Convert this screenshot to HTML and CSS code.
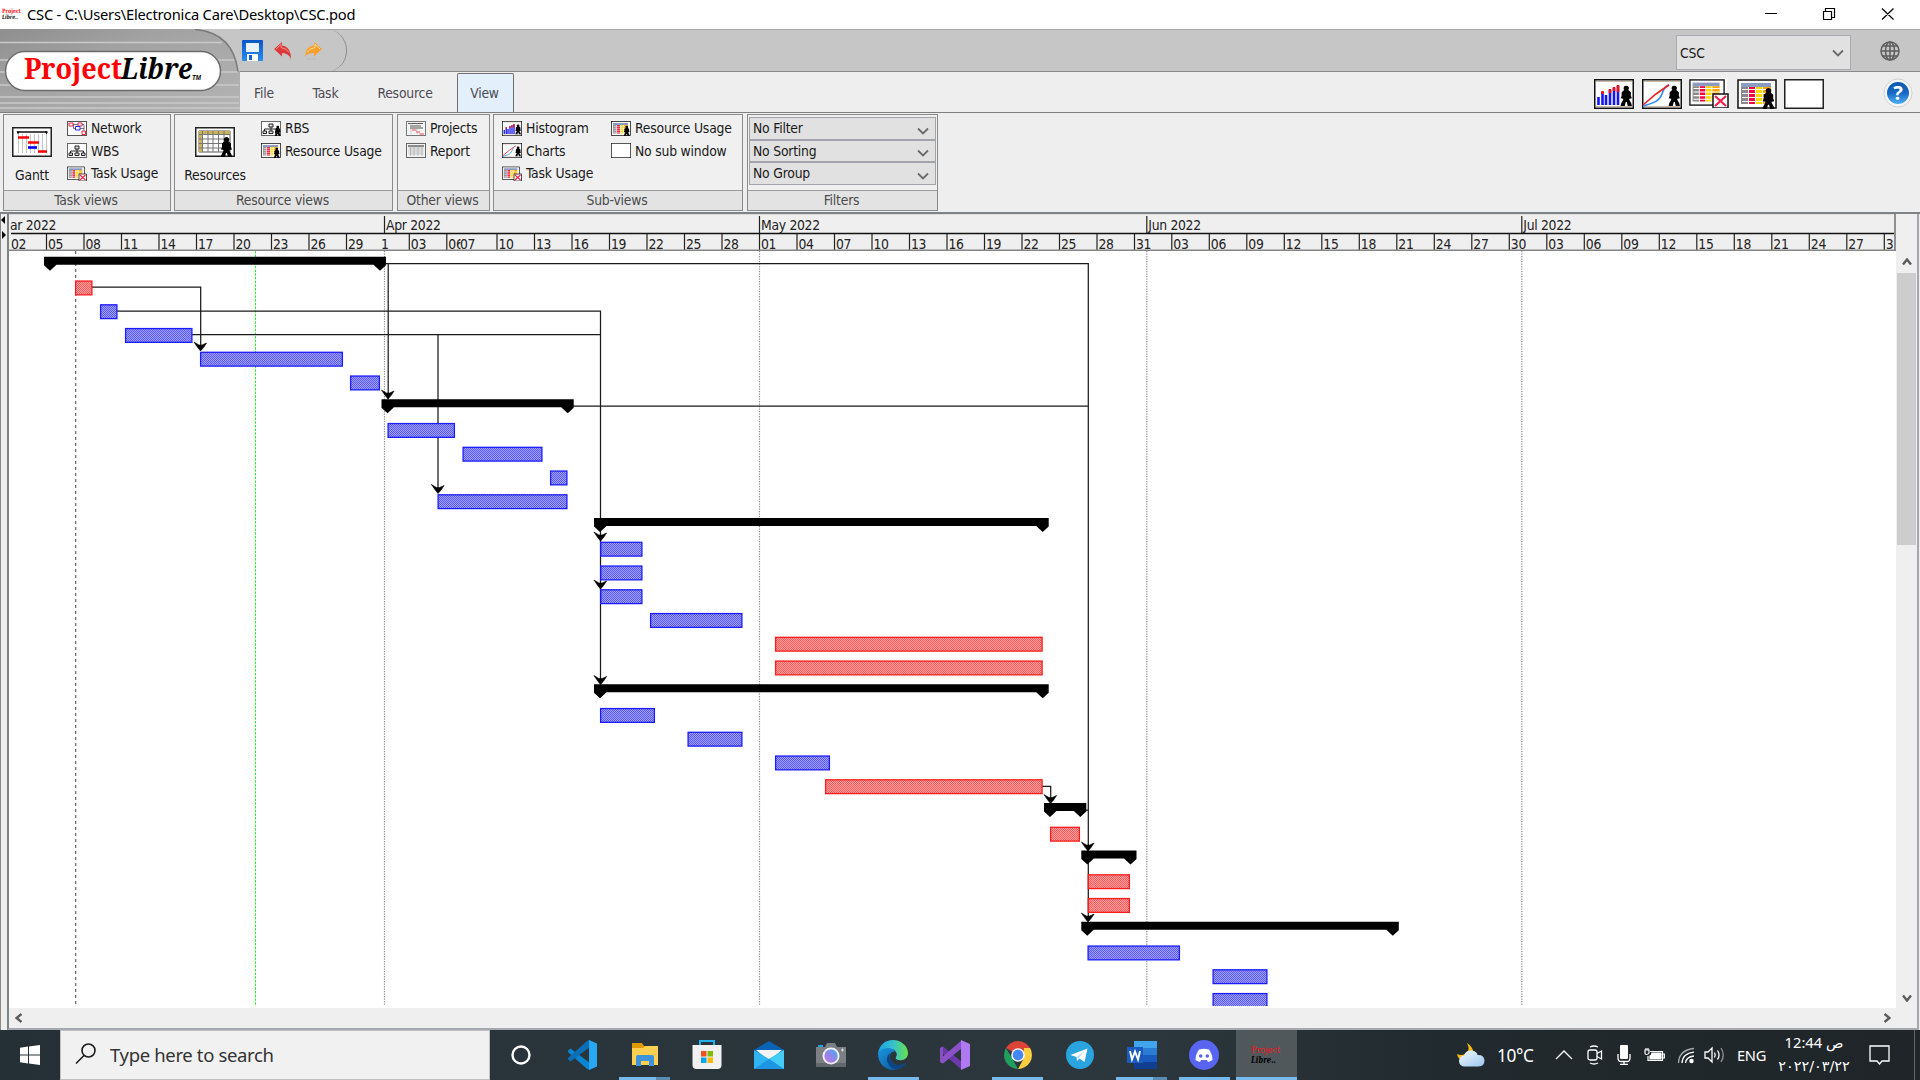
FILE: index.html
```html
<!DOCTYPE html>
<html lang="en">
<head>
<meta charset="utf-8">
<title>CSC - C:\Users\Electronica Care\Desktop\CSC.pod</title>
<link rel="stylesheet" href="styles.css">
</head>
<body>
<svg class="defs" width="0" height="0" aria-hidden="true">
  <defs>
    <linearGradient id="gSteel" x1="0" y1="0" x2="1" y2="1"><stop offset="0" stop-color="#8e8e8e"/><stop offset=".35" stop-color="#a2a2a2"/><stop offset="1" stop-color="#b4b4b4"/></linearGradient>
    <linearGradient id="gHelp" x1="0" y1="0" x2="0" y2="1"><stop offset="0" stop-color="#0d58b0"/><stop offset=".5" stop-color="#1668c4"/><stop offset="1" stop-color="#4db0f4"/></linearGradient>
    <linearGradient id="gDisk" x1="0" y1="0" x2="0" y2="1"><stop offset="0" stop-color="#0a55c4"/><stop offset="1" stop-color="#2a8cf0"/></linearGradient>
    <linearGradient id="gEdgeA" x1="0" y1="0" x2="1" y2="0"><stop offset="0" stop-color="#1ba0e0"/><stop offset=".5" stop-color="#35c2cf"/><stop offset="1" stop-color="#66e04a"/></linearGradient>
    <linearGradient id="gEdgeB" x1="0" y1="0" x2="1" y2="1"><stop offset="0" stop-color="#1b96e0"/><stop offset="1" stop-color="#0b4e94"/></linearGradient>
    <linearGradient id="gLens" x1="1" y1="0" x2="0" y2="1"><stop offset="0" stop-color="#3bb4f0"/><stop offset=".5" stop-color="#8f84e8"/><stop offset="1" stop-color="#c77ee0"/></linearGradient>
    <linearGradient id="gCloud" x1="0" y1="0" x2="1" y2="1"><stop offset="0" stop-color="#f2f8ff"/><stop offset="1" stop-color="#9cc6ee"/></linearGradient>
    <symbol id="person" viewBox="0 0 12 20"><path d="M6 0a2.6 2.6 0 0 1 2 4.3L10.500 6.500V10l1 2.500L9 13v1l2 3.500.5 2.500H7.500L6.500 16h-1l-1 4H.5L1 17.500 3 14v-1L.5 12.500l1-2.500V6.500L4 4.300A2.600 2.600 0 0 1 6 0z" fill="#000"/></symbol>
    <symbol id="i-gantt" viewBox="0 0 40 30"><rect x=".75" y=".75" width="38.500" height="28.500" fill="#fff" stroke="#222" stroke-width="1.500"/><path d="M5 5h30" stroke="#111" stroke-width="1.500"/><path d="M4.500 4.500h3l-1.500 3zM33 4.500h3l-1.500 3z"/><path d="M6.500 7v19M10.500 7v19M14.500 7v19M18.500 7v19M22.500 7v19M26.500 7v19M30.500 7v19M34.500 7v19" stroke="#c4c4c4"/><path d="M6 10.500h11M16 15.500h11M26 24.500h9" stroke="#f00" stroke-width="2.600"/><path d="M16 20.500h9" stroke="#00f" stroke-width="2.600"/></symbol>
    <symbol id="i-network" viewBox="0 0 40 30"><rect x="1" y="1" width="38" height="28" fill="#fff" stroke="#555" stroke-width="2"/><path d="M4 4h8v6H4zM22 4h8v6h-8zM30 20h7v7h-7z" fill="#fff" stroke="#ff2540" stroke-width="2"/><path d="M17 11h9v7h-9z" fill="#fff" stroke="#22f" stroke-width="2"/><path d="M12 7h10M30 7h4v12M13 8v7h4M26 15h8" fill="none" stroke="#446" stroke-width="1.500"/></symbol>
    <symbol id="i-wbs" viewBox="0 0 40 30"><rect x="1" y="1" width="38" height="28" fill="#fff" stroke="#666" stroke-width="2"/><path d="M16 6h8v6h-8zM4 20h7v5H4zM16 20h8v5h-8zM29 20h7v5h-7z" fill="#ddd" stroke="#222" stroke-width="2"/><path d="M20 12v8M7 20v-4h26v4" fill="none" stroke="#222" stroke-width="2"/></symbol>
    <symbol id="i-rbs" viewBox="0 0 40 30"><use href="#i-wbs" width="40" height="30"/><use href="#person" x="27" y="9" width="13" height="21"/></symbol>
    <symbol id="i-usage" viewBox="0 0 40 30"><rect x="1" y="1" width="38" height="28" fill="#fff" stroke="#111" stroke-width="1.500"/><path d="M4 4h30v4H4z" fill="#8c9cc0"/><path d="M4 8h7v17H4z" fill="#8a8a8a"/><path d="M12 8h6v17h-6z" fill="#f5073e"/><path d="M19 8h6v17h-6z" fill="#ffd800"/><path d="M26 8h8v17h-8z" fill="#ffa500"/><path d="M5 10.500h29M5 14.500h29M5 18.500h29M5 22.500h29" stroke="#fff" stroke-width="1.200"/></symbol>
    <symbol id="i-taskusage" viewBox="0 0 40 30"><use href="#i-usage" width="36" height="29"/><rect x="24" y="16" width="15" height="14" fill="#fff" stroke="#111" stroke-width="1.500"/><path d="M26 18l11 10M37 18L26 28" stroke="#f02048" stroke-width="2.200"/></symbol>
    <symbol id="i-resusage" viewBox="0 0 40 30"><use href="#i-usage" width="40" height="30"/><use href="#person" x="25" y="9" width="13" height="21"/></symbol>
    <symbol id="i-resources" viewBox="0 0 40 30"><rect x=".75" y=".75" width="38.500" height="28.500" fill="#fff" stroke="#222" stroke-width="1.500"/><path d="M4 4h31v21H4z" fill="#fff" stroke="#555"/><path d="M4 4h31v3H4zM4 4h3v21H4z" fill="#c9b45a"/><path d="M4 7.500h31M4 12h31M4 16.500h31M4 21h31M7.500 4v21M13 4v21M18 4v21M23.500 4v21M29 4v21" stroke="#777"/><use href="#person" x="25" y="10" width="13" height="20"/></symbol>
    <symbol id="i-projects" viewBox="0 0 40 30"><rect x="1" y="1" width="38" height="28" fill="#f4f4f4" stroke="#777" stroke-width="2"/><path d="M4 5h30M8 10h22M8 14h26" stroke="#555" stroke-width="2"/><path d="M12 18h9M20 22h8M27 26h9" stroke="#f45" stroke-width="2.400"/><path d="M10 4v22M22 4v22" stroke="#aaa"/></symbol>
    <symbol id="i-report" viewBox="0 0 40 30"><rect x="1" y="1" width="38" height="28" fill="#f4f4f4" stroke="#666" stroke-width="2"/><path d="M4 6h32" stroke="#666" stroke-width="3"/><path d="M5 10h30M5 14h30M5 18h30M5 22h30M9 6v20M16 6v20M24 6v20M32 6v20" stroke="#aaa" stroke-width="1.400"/></symbol>
    <symbol id="i-histo" viewBox="0 0 40 30"><rect x=".75" y=".75" width="38.500" height="28.500" fill="#fff" stroke="#111" stroke-width="1.500"/><path d="M2 2.500h36M2 27.500h36" stroke="#cdb8a6"/><path d="M4.500 26v-8M8.500 26V13M12 26V16M16 26V11M20 26V9M24 26V7" stroke="#1414f5" stroke-width="2.600"/><path d="M8.500 15v-3M16 14v-4M20 12V8M24 13V6" stroke="#f01010" stroke-width="2.600"/><use href="#person" x="26" y="6.500" width="12.500" height="20.500"/></symbol>
    <symbol id="i-charts" viewBox="0 0 40 30"><rect x=".75" y=".75" width="38.500" height="28.500" fill="#fff" stroke="#111" stroke-width="1.500"/><path d="M2 2.500h36M2 27.500h36" stroke="#cdb8a6"/><path d="M1 27c10-3 16-4 19-12s4-8 7-9" fill="none" stroke="#2a8cff" stroke-width="1.600"/><path d="M1 26L14 15l13-9" fill="none" stroke="#f02020" stroke-width="1.600"/><use href="#person" x="26" y="6.500" width="12.500" height="20.500"/></symbol>
    <symbol id="i-blank" viewBox="0 0 40 30"><rect x=".75" y=".75" width="38.500" height="28.500" fill="#fff" stroke="#222" stroke-width="1.500"/></symbol>
    <symbol id="i-down" viewBox="0 0 12 8"><path d="M1 1.500l5 5 5-5" fill="none" stroke="#6a6a6a" stroke-width="1.800"/></symbol>
    <pattern id="hBlue" width="2" height="2" patternUnits="userSpaceOnUse"><rect width="2" height="2" fill="#a4a4ff"/><path d="M0 0h1v1H0zM1 1h1v1H1z" fill="#5656ff"/></pattern>
    <pattern id="hRed" width="2" height="2" patternUnits="userSpaceOnUse"><rect width="2" height="2" fill="#ffa4a4"/><path d="M0 0h1v1H0zM1 1h1v1H1z" fill="#ff5656"/></pattern>
  </defs>
</svg>

<header class="titlebar">
  <svg class="appicon" width="22" height="20" viewBox="0 0 22 20"><text x="0" y="9" class="mini mini-red" textLength="19" lengthAdjust="spacingAndGlyphs">Project</text><text x="0" y="15" class="mini mini-it" textLength="16" lengthAdjust="spacingAndGlyphs">Libre..</text></svg>
  <span class="title">CSC - C:\Users\Electronica Care\Desktop\CSC.pod</span>
  <svg class="winctl" width="150" height="28" viewBox="0 0 150 28" fill="none" stroke="#000" stroke-width="1.200"><path d="M15 13.500h12M73.500 11.500h8v8h-8zM75.500 11.500v-3h9v9h-3M132 8.500l11.500 11M143.500 8.500L132 19.500"/></svg>
</header>

<section class="ribbon-top">
  <svg class="brand" width="240" height="83" viewBox="0 0 240 83">
    <rect width="240" height="83" fill="#c6c6c6"/>
    <path d="M0 0h195q38 3 43 42h2v41H0z" fill="url(#gSteel)"/>
    <path d="M0 13.500h222M0 31h235M0 43h238M0 56h239M0 68h239M0 74h239M0 79h240" stroke="#c9c9c9" stroke-width="1.500"/>
    <path d="M195 .5q38 3 43 42" fill="none" stroke="#7a7a7a" stroke-width="1.500"/>
    <rect x="5.500" y="22.500" width="215" height="39" rx="19.500" fill="#fff" stroke="#6c6c6c" stroke-width="1.500"/>
    <text x="24" y="50" class="logo logo-red" textLength="98" lengthAdjust="spacingAndGlyphs">Project</text>
    <text x="121" y="50" class="logo logo-it" textLength="71" lengthAdjust="spacingAndGlyphs">Libre</text>
    <text x="192" y="51" class="logo-tm" textLength="9" lengthAdjust="spacingAndGlyphs">TM</text>
  </svg>
  <div class="top-right">
    <div class="quickbar">
      <div class="quick">
        <svg width="21" height="21" viewBox="0 0 21 21"><rect width="21" height="21" rx="1" fill="url(#gDisk)"/><path d="M4 3h13v9H4z" fill="#e8f2ff"/><path d="M5 14h11v7H5z" fill="#fff"/><path d="M7 15h3v5H7z" fill="#1560c8"/></svg>
        <svg width="18" height="18" viewBox="0 0 18 18"><path d="M0 7l8-7v3.500q9 1 9 14Q15 11 8 11v3.500z" fill="#dc3a3a"/><path d="M2 7l5-4.500v3q6 1 8 5" fill="none" stroke="#f49090"/></svg>
        <svg width="18" height="18" viewBox="0 0 18 18"><path d="M17 7L9 0v3.500Q0 4.500 0 15q2-4 9-4v3.500z" fill="#f5a02c"/><path d="M15 7l-5-4.500v3q-6 1-8 5" fill="none" stroke="#ffd890"/><path d="M1 17h10" stroke="#bbb"/></svg>
      </div>
      <div class="project-select"><span>CSC</span><svg width="12" height="8"><use href="#i-down"/></svg></div>
      <svg class="globe" width="20" height="20" viewBox="0 0 20 20" fill="none" stroke="#5e5e5e" stroke-width="1.500"><circle cx="10" cy="10" r="9"/><ellipse cx="10" cy="10" rx="4.500" ry="9"/><path d="M10 1v18M1 10h18M2.500 5h15M2.500 15h15"/></svg>
    </div>
    <nav class="tabs">
      <span class="tab t1">File</span><span class="tab t2">Task</span><span class="tab t3">Resource</span><span class="tab t4 active">View</span>
      <div class="tools">
        <svg width="40" height="30"><use href="#i-histo"/></svg>
        <svg width="40" height="30"><use href="#i-charts"/></svg>
        <svg width="40" height="32" viewBox="0 0 40 30"><rect width="38" height="30" fill="#fff"/><use href="#i-taskusage"/></svg>
        <svg width="40" height="30"><use href="#i-resusage"/></svg>
        <svg width="40" height="30"><use href="#i-blank"/></svg>
      </div>
      <svg class="help" width="30" height="30" viewBox="0 0 30 30"><circle cx="15" cy="15" r="14" fill="#f6f6f6" stroke="#d2d2d2"/><circle cx="15" cy="15" r="11" fill="url(#gHelp)"/><text x="15" y="22" text-anchor="middle" class="q">?</text></svg>
    </nav>
  </div>
</section>

<section class="bands">
  <div class="band b1">
    <div class="content">
      <div class="big"><svg width="40" height="30"><use href="#i-gantt"/></svg><span>Gantt</span></div>
      <div class="col">
        <div class="cmd"><svg width="20" height="15"><use href="#i-network"/></svg><span>Network</span></div>
        <div class="cmd"><svg width="20" height="15"><use href="#i-wbs"/></svg><span>WBS</span></div>
        <div class="cmd"><svg width="20" height="15"><use href="#i-taskusage"/></svg><span>Task Usage</span></div>
      </div>
    </div>
    <div class="caption">Task views</div>
  </div>
  <div class="band b2">
    <div class="content">
      <div class="big"><svg width="40" height="30"><use href="#i-resources"/></svg><span>Resources</span></div>
      <div class="col">
        <div class="cmd"><svg width="20" height="15"><use href="#i-rbs"/></svg><span>RBS</span></div>
        <div class="cmd"><svg width="20" height="15"><use href="#i-resusage"/></svg><span>Resource Usage</span></div>
      </div>
    </div>
    <div class="caption">Resource views</div>
  </div>
  <div class="band b3">
    <div class="content">
      <div class="col">
        <div class="cmd"><svg width="20" height="15"><use href="#i-projects"/></svg><span>Projects</span></div>
        <div class="cmd"><svg width="20" height="15"><use href="#i-report"/></svg><span>Report</span></div>
      </div>
    </div>
    <div class="caption">Other views</div>
  </div>
  <div class="band b4">
    <div class="content">
      <div class="col first">
        <div class="cmd"><svg width="20" height="15"><use href="#i-histo"/></svg><span>Histogram</span></div>
        <div class="cmd"><svg width="20" height="15"><use href="#i-charts"/></svg><span>Charts</span></div>
        <div class="cmd"><svg width="20" height="15"><use href="#i-taskusage"/></svg><span>Task Usage</span></div>
      </div>
      <div class="col">
        <div class="cmd"><svg width="20" height="15"><use href="#i-resusage"/></svg><span>Resource Usage</span></div>
        <div class="cmd"><svg width="20" height="15"><use href="#i-blank"/></svg><span>No sub window</span></div>
      </div>
    </div>
    <div class="caption">Sub-views</div>
  </div>
  <div class="band b5">
    <div class="content filters">
      <div class="combo"><span>No Filter</span><svg width="12" height="8"><use href="#i-down"/></svg></div>
      <div class="combo"><span>No Sorting</span><svg width="12" height="8"><use href="#i-down"/></svg></div>
      <div class="combo"><span>No Group</span><svg width="12" height="8"><use href="#i-down"/></svg></div>
    </div>
    <div class="caption">Filters</div>
  </div>
</section>

<main class="workspace">
  <div class="splitter"><svg width="7" height="30" viewBox="0 0 7 30"><path d="M6 2v8L2 6zM3 17v8l4-4z"/></svg></div>
  <div class="pane">
    <div class="chartcol">
      <svg id="timescale" width="1887" height="37" viewBox="9 214 1887 37"></svg>
      <svg id="chart" width="1887" height="757" viewBox="9 251 1887 757"></svg>
    </div>
    <div class="vscroll">
      <svg width="10" height="8" viewBox="0 0 10 8"><path d="M1 6.500l4-5 4 5" fill="none" stroke="#5c5c5c" stroke-width="2.400"/></svg>
      <div class="thumb"></div>
      <svg width="10" height="8" viewBox="0 0 10 8"><path d="M1 1.500l4 5 4-5" fill="none" stroke="#5c5c5c" stroke-width="2.400"/></svg>
    </div>
    <div class="hscroll">
      <svg width="8" height="10" viewBox="0 0 8 10"><path d="M6.500 1l-5 4 5 4" fill="none" stroke="#5c5c5c" stroke-width="2.400"/></svg>
      <svg width="8" height="10" viewBox="0 0 8 10"><path d="M1.500 1l5 4-5 4" fill="none" stroke="#5c5c5c" stroke-width="2.400"/></svg>
    </div>
  </div>
</main>

<footer class="taskbar">
  <div class="start"><svg width="20" height="20" viewBox="0 0 20 20" fill="#fff"><path d="M0 2.800L8 1.600v7.900H0zM9 1.400L20 0v9.500H9zM0 10.500h8v7.900L0 17.200zM9 10.500h11V20L9 18.600z"/></svg></div>
  <div class="search"><svg width="22" height="22" viewBox="0 0 22 22" fill="none" stroke="#1c1c1c" stroke-width="1.600"><circle cx="13.500" cy="7.500" r="6.500"/><path d="M9 12.500L1 20.500"/></svg><span>Type here to search</span></div>
  <div class="apps">
    <div class="app"><svg width="32" height="32" viewBox="0 0 32 32"><ellipse cx="16" cy="16" rx="8.500" ry="8.500" fill="none" stroke="#fff" stroke-width="2.400"/></svg></div>
    <div class="app"><svg width="32" height="32" viewBox="0 0 32 32"><path d="M1 11.500L3.500 9.500 23 24v7l-3-1L1 13z" fill="#0a85d2"/><path d="M1 20.500l2.500 2L23 8V1l-3 1L1 19z" fill="#0b6fb8"/><path d="M22 1l8 3.500v23L22 31z" fill="#28a8f4"/></svg></div>
    <div class="app run multi"><svg width="32" height="32" viewBox="0 0 32 32"><path d="M3 4h10l2 3h14v6H3z" fill="#e09a00"/><path d="M3 9h11l2-2h13v19H3z" fill="#ffd050"/><path d="M7 27v-9q0-2 2-2h14q2 0 2 2v9h-5v-5h-8v5z" fill="#3d93dc"/></svg></div>
    <div class="app"><svg width="32" height="32" viewBox="0 0 32 32"><path d="M9 7V2h14v5" fill="none" stroke="#22b0ee" stroke-width="2"/><path d="M1.500 6h29v20q0 4-4 4h-21q-4 0-4-4z" fill="#f1f1f1"/><path d="M10 12h5.500v5.500H10z" fill="#f25022"/><path d="M16.500 12H22v5.500h-5.500z" fill="#7fba00"/><path d="M10 18.500h5.500V24H10z" fill="#00a4ef"/><path d="M16.500 18.500H22V24h-5.500z" fill="#ffb900"/></svg></div>
    <div class="app"><svg width="32" height="32" viewBox="0 0 32 32"><path d="M1 11L16 2l15 9v4H1z" fill="#0b63b8"/><path d="M3 11h26L16 22z" fill="#f4f4f4"/><path d="M1 11l15 9 15-9v19H1z" fill="#2eb5f2"/><path d="M16 20l15-9v19z" fill="#45cdf8"/><path d="M1 30l15-10 15 10z" fill="#1e95e2"/></svg></div>
    <div class="app"><svg width="32" height="32" viewBox="0 0 32 32"><path d="M3 6h5v4H3z" fill="#1ea0e8"/><path d="M1 8h9l2-4h8l2 4h9v20H1z" fill="#7b8085"/><path d="M1 24h30v4H1z" fill="#62676c"/><circle cx="16" cy="17" r="8.500" fill="#f2f2f2"/><circle cx="16" cy="17" r="6.700" fill="url(#gLens)"/><path d="M27.500 9.500v3M26 11h3" stroke="#ddd"/></svg></div>
    <div class="app run"><svg width="32" height="32" viewBox="0 0 32 32"><path d="M1 15C2 6 8 1 16 1s15 6 15 13c0 5-4 8-9 7-2 0-4-1-3-3 2-3 0-8-6-8-6 0-10 2-12 5z" fill="url(#gEdgeA)"/><path d="M1 15c0-3 5-6 10-6 3 0 6 1 7 4-4-1-6 3-5 7 2 6 9 8 16 4-3 5-8 7-13 7C8 31 1 24 1 15z" fill="url(#gEdgeB)"/><path d="M13 14c-6 5-3 13 5 16.500C24 30 28 27 29 24c-7 4-14 2-16-4-.7-2.400-.6-4.500 0-6z" fill="#0c4583"/></svg></div>
    <div class="app"><svg width="32" height="32" viewBox="0 0 32 32"><path d="M1 9l3-1.500L23 23v8L1 12z" fill="#6c3aa8"/><path d="M1 9v14l3 1.500V7.500z" fill="#8350bf"/><path d="M1 23l3 1.500L23 9V1L1 20z" fill="#8b52c8"/><path d="M22 1l9 4v22l-9 4z" fill="#b179f1"/></svg></div>
    <div class="app run"><svg width="32" height="32" viewBox="0 0 32 32"><path d="M16 16L3.900 9A14 14 0 0 1 28.100 9z" fill="#dc4437"/><path d="M3.900 9l6.600 11L16 30A14 14 0 0 1 3.900 9z" fill="#1fa15d"/><path d="M28.100 9A14 14 0 0 1 16 30l6-11V9z" fill="#ffcd40"/><circle cx="16" cy="16" r="6.800" fill="#fff"/><circle cx="16" cy="16" r="5.400" fill="#4688f1"/></svg></div>
    <div class="app"><svg width="32" height="32" viewBox="0 0 32 32"><circle cx="16" cy="16" r="14" fill="#2aa4de"/><path d="M6.500 16L23.500 9.500 20.500 23l-5-3.500-2.500 2.500-.5-4z" fill="#fff"/><path d="M12.500 18L20 12.500l-5.500 7" fill="#bcdff2"/></svg></div>
    <div class="app run multi"><svg width="32" height="32" viewBox="0 0 32 32"><path d="M8 2h23v7H8z" fill="#41a5ee"/><path d="M8 9h23v7H8z" fill="#2b7cd3"/><path d="M8 16h23v7H8z" fill="#185abd"/><path d="M8 23h23v7H8z" fill="#103f91"/><path d="M1 8h16v16H1z" fill="#1a5cbe"/><path d="M4 12l2 8.500L9 12.500l3 8L14 12" fill="none" stroke="#fff" stroke-width="1.900"/></svg></div>
    <div class="app run"><svg width="32" height="32" viewBox="0 0 32 32"><circle cx="16" cy="16" r="15" fill="#5865f2"/><path d="M11 10.500q5-1.500 10 0 3.500 5 3.500 10.500-2 1.500-4.500 2l-1-2h-6l-1 2q-2.500-.5-4.500-2 0-5.500 3.500-10.500z" fill="#fff"/><circle cx="12.700" cy="17" r="1.800" fill="#5865f2"/><circle cx="19.300" cy="17" r="1.800" fill="#5865f2"/></svg></div>
    <div class="app run current"><svg width="34" height="32" viewBox="0 0 34 32"><text x="2" y="14" class="tiny tiny-red" textLength="29" lengthAdjust="spacingAndGlyphs">Project</text><text x="2" y="23.500" class="tiny tiny-it" textLength="25" lengthAdjust="spacingAndGlyphs">Libre..</text></svg></div>
  </div>
  <div class="tray">
    <svg width="28" height="26" viewBox="0 0 28 26"><path d="M10 1q4 8-2 11-4 2-8 0 1 6 8 7l9-5Q17 5 10 1z" fill="#fdb913"/><path d="M8 24.500a5.500 5.500 0 0 1-1-11Q9 8 14.500 8.500 20 9 20.500 13q6-.5 7 5 0 6.500-6 6.500z" fill="url(#gCloud)"/></svg>
    <span class="temp">10°C</span>
    <svg class="chev" width="18" height="10" viewBox="0 0 18 10" fill="none" stroke="#fff" stroke-width="1.400"><path d="M1 9l8-8 8 8"/></svg>
    <svg class="meet" width="16" height="20" viewBox="0 0 16 20" fill="none" stroke="#fff" stroke-width="1.300"><rect x="1" y="5" width="9" height="10" rx="2"/><path d="M10 8.500L14.500 6v8L10 11.500M3 2q4-2 8 0M3 18q4 2 8 0"/></svg>
    <svg class="mic" width="14" height="20" viewBox="0 0 14 20"><rect x="3" y="0" width="8" height="14" rx="1" fill="#fff"/><path d="M1 9v4q0 3.500 3 3.500h6q3 0 3-3.500V9M7 16v3.500M3 19.500h8" fill="none" stroke="#fff" stroke-width="1.300"/></svg>
    <svg class="bat" width="21" height="16" viewBox="0 0 21 16" fill="none" stroke="#fff" stroke-width="1.200"><path d="M6 4.500h12.500v9H4V9M19 7h1.300v4H19"/><path d="M8 6h9v6H6V9q2-1 2-3z" fill="#fff"/><path d="M1 3v3q0 1.500 1.500 1.500T5 6V3zM2 1v2M4 1v2"/></svg>
    <svg class="wifi" width="18" height="17" viewBox="0 0 18 17" fill="none" stroke="#fff" stroke-width="1.300"><path d="M1.500 16Q2 3 17 1.500" opacity=".6"/><path d="M5 16Q5.500 6.500 17 5.200M8.500 16Q9 10 17 9"/><circle cx="14.500" cy="14" r="1.600" fill="#fff"/></svg>
    <svg class="spk" width="22" height="18" viewBox="0 0 22 18" fill="none" stroke="#fff" stroke-width="1.300"><path d="M1 6h3l4-4v14l-4-4H1zM10.500 6.500q1.500 2.500 0 5M13.500 4.500q3 4.500 0 9"/><path d="M17 2q4.500 7 0 14" opacity=".5"/></svg>
    <span class="lang">ENG</span>
    <div class="clock"><bdo dir="ltr" class="time">12:44 <span class="ar">ص</span></bdo><bdo dir="ltr" class="ar date">٢٠٢٢/٠٣/٢٢</bdo></div>
    <svg class="note" width="21" height="20" viewBox="0 0 21 20" fill="none" stroke="#fff" stroke-width="1.300"><path d="M1 1h19v15h-7l-2.500 3L8 16H1z"/></svg>
    <i class="peek"></i>
  </div>
</footer>
<script src="gantt.js"></script>
</body>
</html>
```
FILE: styles.css
```css
* { box-sizing: border-box; }
body { margin: 0; width: 1920px; height: 1080px; overflow: hidden; display: flex; flex-direction: column; background: #eee; color: #1a1a1a; font: 13.8px "DejaVu Sans Condensed", "DejaVu Sans", sans-serif; font-stretch: condensed; letter-spacing: -0.2px; }
svg { display: block; flex: none; }
.defs { width: 0; height: 0; position: absolute; }

.titlebar { height: 29px; flex: none; background: #fff; display: flex; align-items: center; padding: 0 0 1px 2px; font: 14.7px "Noto Sans", sans-serif; letter-spacing: -0.22px; color: #000; }
.title { margin-left: 3px; white-space: nowrap; }
.winctl { margin-left: auto; margin-right: 20px; }
.mini { font: bold 6px "DejaVu Serif", serif; letter-spacing: 0; }
.mini-red { fill: #f01010; }
.mini-it { font-style: italic; fill: #111; }

.ribbon-top { height: 83px; flex: none; display: flex; }
.logo { font: bold 29px "Noto Serif", "DejaVu Serif", serif; letter-spacing: 0; }
.logo-red { fill: #f00; }
.logo-it { font-style: italic; fill: #000; }
.logo-tm { font: italic bold 6.5px "Liberation Sans", sans-serif; letter-spacing: 0; }
.top-right { flex: 1; }
.quickbar { height: 43px; background: #c6c6c6; border-top: 1px solid #a8a8a8; border-bottom: 1.5px solid #8a8a8a; display: flex; align-items: center; }
.quick { width: 107px; height: 43px; border-right: 1.5px solid #8a8a8a; border-radius: 0 21px 21px 0; display: flex; align-items: center; padding-left: 2px; gap: 12px; }
.quick svg + svg { margin-left: -1px; margin-right: 2px; }
.project-select { margin: 3px 0 0 auto; width: 175px; height: 35px; border: 1.5px solid #a9a9b2; background: #e1e1e1; display: flex; align-items: center; justify-content: space-between; padding: 1px 6px 0 3px; }
.globe { margin: 0 20px 0 29px; }
.tabs { height: 40px; background: #eee; display: flex; align-items: flex-end; color: #4b4b55; }
.tab { height: 39px; display: flex; align-items: center; justify-content: center; padding-top: 1px; }
.t1 { width: 48px; } .t2 { width: 75px; } .t3 { width: 84px; margin-right: 10px; } .t4 { width: 57px; padding: 0 2px 0 0; }
.active { background: #e3f0fb; border: 1.5px solid #707070; border-bottom: 0; border-radius: 2px 2px 0 0; }
.tools { margin-left: auto; display: flex; gap: 7.5px; padding-bottom: 3px; align-items: flex-end; }
.help { margin: 0 7px 4px 59px; }
.q { font: bold 20px "Noto Sans", sans-serif; fill: #fff; letter-spacing: 0; }

.bands { height: 100px; flex: none; border-top: 1.5px solid #7f7f7f; display: flex; gap: 3px; padding: 1px 0 0 3px; }
.band { height: 97px; border: 1.5px solid #8a8a8a; display: flex; flex-direction: column; background: #f0f0f0; }
.b1 { width: 168px; } .b2 { width: 219px; } .b3 { width: 93px; margin-left: 1px; } .b4 { width: 250px; } .b5 { width: 191px; margin-left: 1px; }
.content { flex: 1; display: flex; padding-top: 2px; }
.caption { height: 20px; flex: none; border-top: 1.5px solid #9c9c9c; background: #e3e3e3; color: #4b4b4b; text-align: center; line-height: 18px; padding-right: 2px; }
.big { display: flex; flex-direction: column; align-items: center; gap: 10px; padding-top: 10px; }
.b1 .big { width: 56px; }
.b2 .big { width: 80px; }
.b1 .col { margin-left: 7px; }
.b2 .col { margin-left: 6px; }
.b3 .col { margin-left: 8px; }
.b4 .col.first { margin-left: 8px; width: 109px; }
.cmd { height: 22.5px; display: flex; align-items: center; gap: 4px; white-space: nowrap; }
.filters { flex-direction: column; padding: 2px 1px 0; }
.combo { height: 22.5px; border: 1.5px solid #a3a3ab; background: #e1e1e1; display: flex; align-items: center; justify-content: space-between; padding: 0 6px 0 3px; }
.combo svg { margin-top: 5px; }

.workspace { height: 818px; flex: none; display: flex; border-top: 2px solid #7f8386; }
.splitter { width: 7px; flex: none; border-left: 1.5px solid #888; }
.splitter svg { margin-left: -2px; }
.pane { flex: 1; border-left: 2px solid #7f8386; border-bottom: 2px solid #a6a8b0; border-right: 2px solid #a6a8b0; margin-right: 1px; display: grid; grid-template-columns: 1888px 19px; grid-template-rows: 794px 20px; background: #efefef; }
#timescale { background: #efefef; }
#chart { background: #fff; }
.vscroll { display: flex; flex-direction: column; align-items: center; padding: 44px 0 6px; }
.thumb { width: 19px; height: 272px; margin: 7px 0 auto; background: #cdcdcd; }
.hscroll { grid-column: 1 / 3; display: flex; align-items: center; justify-content: space-between; padding: 0 25px 0 6px; }
.ts { font: 13.8px "DejaVu Sans Condensed", "DejaVu Sans", sans-serif; font-stretch: condensed; letter-spacing: -0.3px; fill: #222; }

.taskbar { height: 50px; flex: none; display: flex; background: linear-gradient(90deg, #253036 0, #2a353b 30%, #2c373d 60%, #212a2e 75%, #1f2528 100%); color: #fff; font-family: "Noto Sans", sans-serif; font-stretch: normal; }
.start { width: 60px; display: flex; align-items: center; justify-content: center; }
.search { width: 430px; background: #f1f1f1; border: 1px solid #c0c0c0; display: flex; align-items: center; color: #333; font-size: 18.5px; padding: 0 0 2px 14px; gap: 13px; letter-spacing: -0.35px; }
.apps { display: flex; gap: 1.15px; }
.app { width: 61px; height: 50px; display: grid; place-items: center; }
.run { background: linear-gradient(#76b9ed, #76b9ed) 50% 100% / 51px 3px no-repeat; }
.multi { background: linear-gradient(90deg, #76b9ed 37px, #5a8cb2 37px) 50% 100% / 51px 3px no-repeat; }
.current { background: linear-gradient(#76b9ed, #76b9ed) 50% 100% / 61px 3px no-repeat, #50585c; }
.tiny { font: 9.5px "DejaVu Serif", serif; letter-spacing: 0; }
.tiny-red { fill: #f01414; }
.tiny-it { font-style: italic; font-weight: bold; fill: #000; }
.tray { margin-left: auto; display: flex; align-items: center; }
.temp { width: 47px; font-size: 17.3px; letter-spacing: -0.4px; margin-left: 12px; }
.chev { margin-left: 11px; }
.meet { margin-left: 14px; }
.mic { margin-left: 14px; }
.bat { margin-left: 13px; }
.wifi { margin-left: 12px; }
.spk { margin-left: 9px; }
.lang { margin-left: 11px; width: 31px; font-size: 14.7px; letter-spacing: -0.3px; }
.clock { width: 76px; margin-left: 8px; margin-right: 1px; padding-bottom: 2px; display: flex; flex-direction: column; align-items: center; font-size: 14.7px; letter-spacing: -0.35px; line-height: 23px; white-space: nowrap; }
.ar { font-family: "DejaVu Sans", sans-serif; font-size: 14.4px; letter-spacing: 0; }
.note { margin-left: 16px; margin-right: 24px; }
.peek { width: 1px; height: 50px; background: #666; margin-right: 5px; }
```
FILE: gantt.js
```js
const NS = 'http://www.w3.org/2000/svg';
function add(parent, name, attrs, text) {
  const el = document.createElementNS(NS, name);
  for (const k in attrs) el.setAttribute(k, attrs[k]);
  if (text) el.textContent = text;
  parent.appendChild(el);
}

// Time scale: three-day ticks, 12.5px per day
const scale = document.getElementById('timescale');
add(scale, 'path', { d: 'M9 214.5H1896', stroke: '#dcdcdc', 'stroke-width': 1 });
add(scale, 'path', { d: 'M11 233.5H1894', stroke: '#111', 'stroke-width': 1.3 });
const label = (x, y, t) => add(scale, 'text', { x, y, class: 'ts' }, t);
const tick = (x, a, b) => add(scale, 'path', { d: `M${x} ${a}V${b}`, stroke: '#222', 'stroke-width': 1.2 });
label(10, 230, 'ar 2022');
[[384.5, 'Apr 2022'], [759.5, 'May 2022'], [1146.8, 'Jun 2022'], [1521.8, 'Jul 2022']].forEach(([x, t]) => { tick(x, 216, 233); label(x + 1.5, 230, t); });
label(11, 249, '02');
const days = [
  [46.5, ['05', '08', '11', '14', '17', '20', '23', '26', '29']],
  [409.3, ['03', '06']], [497, ['10', '13', '16', '19', '22', '25', '28']],
  [759.5, ['01', '04', '07', '10', '13', '16', '19', '22', '25', '28', '31']],
  [1171.8, ['03', '06', '09', '12', '15', '18', '21', '24', '27', '30']],
  [1546.8, ['03', '06', '09', '12', '15', '18', '21', '24', '27', '3']]
];
days.forEach(([x0, list]) => list.forEach((t, i) => { tick(x0 + 37.5 * i, 234, 250); label(x0 + 37.5 * i + 1.5, 249, t); }));
label(381, 249, '1');
add(scale, 'rect', { x: 460.5, y: 235, width: 16, height: 14, fill: '#efefef' });
label(460, 249, '07');
add(scale, 'path', { d: 'M9 250.3H1896M1895 214V251', stroke: '#858585', 'stroke-width': 1.8 });

// Gantt body
const chart = document.getElementById('chart');
[384.5, 759.5, 1146.8, 1521.8].forEach(x => add(chart, 'path', { d: `M${x} 251V1006`, stroke: '#8c8c8c', 'stroke-width': 1.2, 'stroke-dasharray': '1.25 1.25' }));
add(chart, 'path', { d: 'M75.7 251V1006', stroke: '#666', 'stroke-width': 1.2, 'stroke-dasharray': '3 3' });
add(chart, 'path', { d: 'M255.5 251V1006', stroke: '#2bef2b', 'stroke-width': 1, 'stroke-dasharray': '2.5 1.2' });

const links = [
  'M386 263.5H1088.3V921', 'M388.2 263.5V399', 'M92 287.2H200.7V350', 'M117 311H600.5V684',
  'M192 334.7H600.5', 'M438 334.7V492', 'M573 406H1088', 'M1042 786.3H1050.7V802', 'M1086 810H1088'
];
links.forEach(d => add(chart, 'path', { d, fill: 'none', stroke: '#1a1a1a', 'stroke-width': 1.25 }));

// [row, type, start, end]
const rows = [
  [0, 's', 44, 386], [1, 'r', 75, 92.5], [2, 'b', 100, 117.5], [3, 'b', 125, 192.5], [4, 'b', 200, 343],
  [5, 'b', 350, 380], [6, 's', 381.5, 573.7], [7, 'b', 387.5, 455], [8, 'b', 462.5, 542.5], [9, 'b', 550, 567.5],
  [10, 'b', 437.5, 567.5], [11, 's', 594, 1048.7], [12, 'b', 600.2, 642.5], [13, 'b', 600.2, 642.5], [14, 'b', 600.2, 642.5],
  [15, 'b', 650, 742.5], [16, 'r', 775, 1042.7], [17, 'r', 775, 1042.7], [18, 's', 594, 1048.7], [19, 'b', 600, 655],
  [20, 'b', 687.5, 742.5], [21, 'b', 775, 830], [22, 'r', 825, 1042.7], [23, 's', 1044, 1086.3], [24, 'r', 1050, 1080],
  [25, 's', 1081.3, 1136.5], [26, 'r', 1087.7, 1130], [27, 'r', 1087.7, 1130], [28, 's', 1081.3, 1398.8],
  [29, 'b', 1087.5, 1180], [30, 'b', 1212.5, 1267.5], [31, 'b', 1212.5, 1267.5]
];
rows.forEach(([i, type, a, b]) => {
  const y = 256.7 + 23.75 * i;
  if (type === 's') {
    add(chart, 'path', { d: `M${a} ${y}H${b}v8.5l-6 5.5-6.5-6H${a + 12.5}l-6.5 6-6-5.5z` });
  } else {
    const red = type === 'r';
    add(chart, 'rect', { x: a + .6, y: y + .6, width: b - a - 1.2, height: 13.8, fill: red ? 'url(#hRed)' : 'url(#hBlue)', stroke: red ? '#ff1c1c' : '#1c1cff', 'stroke-width': 1.3 });
  }
});

[[388, 399], [200.5, 351], [438, 493.5], [600.5, 541], [600.5, 589], [600.5, 684.5], [1050.5, 803.5], [1088, 851], [1088, 922]]
  .forEach(([x, y]) => add(chart, 'path', { d: `M${x} ${y}l-2.800-3.500-3.800-5.500 5 3h3.200l4.500-2-3 4.500z`, stroke: '#000', 'stroke-width': .6 }));
add(chart, 'path', { d: 'M9 1007H1896', stroke: '#fff', 'stroke-width': 2 });
```
